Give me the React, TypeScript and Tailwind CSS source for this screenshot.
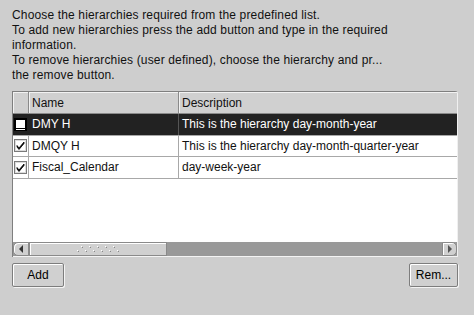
import React from 'react';

const rows = [
  { name: 'DMY H', desc: 'This is the hierarchy day-month-year', checked: false, selected: true },
  { name: 'DMQY H', desc: 'This is the hierarchy day-month-quarter-year', checked: true, selected: false },
  { name: 'Fiscal_Calendar', desc: 'day-week-year', checked: true, selected: false },
];

// Metal-style check box drawn as svg
function CheckBox({ checked, selected }: { checked: boolean; selected: boolean }) {
  if (selected) {
    return (
      <svg width="13" height="13" viewBox="0 0 13 13">
        <rect x="0.5" y="0.5" width="12" height="12" fill="#000" stroke="#000" />
        <rect x="2" y="2" width="9" height="8" fill="#fff" />
        <rect x="2" y="11" width="9" height="1" fill="#fff" />
      </svg>
    );
  }
  return (
    <svg width="13" height="13" viewBox="0 0 13 13">
      <rect x="0.5" y="0.5" width="12" height="12" fill="#fff" stroke="#7a7a7a" />
      <rect x="1.5" y="1.5" width="10" height="10" fill="none" stroke="#dcdcdc" />
      {checked && <path d="M3 6.5 L5 9 L10 3 L10 4.5 L5 10.5 L3 8 Z" fill="#000" stroke="#000" strokeWidth="0.8" />}
    </svg>
  );
}

function Grip() {
  const top = [0, 1, 2, 3, 4];
  const bottom = [0, 1, 2, 3, 4, 5];
  return (
    <svg width="42" height="8" viewBox="0 0 42 8">
      {top.map(i => (
        <g key={'t' + i}>
          <rect x={4 + i * 8} y={1} width="1" height="1" fill="#fff" />
          <rect x={5 + i * 8} y={2} width="1" height="1" fill="#888" />
        </g>
      ))}
      {bottom.map(i => (
        <g key={'b' + i}>
          <rect x={i * 8} y={5} width="1" height="1" fill="#fff" />
          <rect x={1 + i * 8} y={6} width="1" height="1" fill="#888" />
        </g>
      ))}
    </svg>
  );
}

function Button({ label, width }: { label: string; width: string }) {
  return (
    <div className={`${width} h-[24px] flex items-center justify-center rounded-[2px] border border-[#7d7d7d] bg-[#d0d0d0] shadow-[inset_1px_1px_0_#ffffff,1px_1px_0_#f4f4f4] text-[12px] text-black`}>
      {label}
    </div>
  );
}

export default function App() {
  return (
    <div
      className="w-[474px] h-[315px] bg-[#cecece] text-[#111] overflow-hidden"
      style={{ fontFamily: '"Liberation Sans", Arial, sans-serif' }}
    >
      <div className="pl-[12px] pt-[8px] text-[12px] leading-[15px] tracking-[0.15px]">
        <div>Choose the hierarchies required from the predefined list.</div>
        <div>To add new hierarchies press the add button and type in the required</div>
        <div>information.</div>
        <div>To remove hierarchies (user defined), choose the hierarchy and pr...</div>
        <div>the remove button.</div>
      </div>

      <div className="ml-[12px] mt-[8px] w-[446px] h-[166px] flex flex-col border-l border-t border-[#7f7f7f] border-r border-r-[#f0f0f0] rounded-tr-[3px] bg-white text-[12px]">
        <div className="flex h-[22px] bg-[#d0d0d0] border-b border-[#8a8a8a]">
          <div className="w-[16px] border-r border-[#8a8a8a] shadow-[inset_1px_1px_0_#f2f2f2]" />
          <div className="w-[150px] flex items-center pl-[3px] border-r border-[#8a8a8a] shadow-[inset_1px_1px_0_#f2f2f2]">Name</div>
          <div className="flex-1 flex items-center pl-[3px] shadow-[inset_1px_1px_0_#f2f2f2]">Description</div>
        </div>
        {rows.map(r => (
          <div
            key={r.name}
            className={`flex h-[21.5px] border-b border-[#a8a8a8] ${r.selected ? 'bg-[#222222] text-white' : 'bg-white text-[#111]'}`}
          >
            <div className={`w-[16px] flex items-center justify-center border-r ${r.selected ? 'border-[#222222]' : 'border-[#a8a8a8]'}`}>
              <CheckBox checked={r.checked} selected={r.selected} />
            </div>
            <div className={`w-[150px] flex items-center pl-[3px] border-r ${r.selected ? 'border-[#555555]' : 'border-[#a8a8a8]'}`}>{r.name}</div>
            <div className="flex-1 flex items-center pl-[3px]">{r.desc}</div>
          </div>
        ))}
        <div className="flex-1 bg-white" />
        <div className="flex h-[15px] bg-[#999999] border-b border-[#f4f4f4]">
          <div className="w-[16px] flex items-center justify-center bg-[#d0d0d0] border border-[#8a8a8a] rounded-l-[5px] shadow-[inset_1px_1px_0_#ffffff]">
            <svg width="5" height="8" viewBox="0 0 5 8">
              <path d="M4 0 L0 4 L4 8 Z" fill="#333" />
            </svg>
          </div>
          <div className="w-[138px] flex items-center justify-center bg-[#d0d0d0] border border-[#8a8a8a] shadow-[inset_1px_1px_0_#ffffff]">
            <Grip />
          </div>
          <div className="flex-1" />
          <div className="w-[15px] flex items-center justify-center bg-[#d0d0d0] border border-[#8a8a8a] rounded-r-[5px] shadow-[inset_1px_1px_0_#ffffff]">
            <svg width="5" height="8" viewBox="0 0 5 8">
              <path d="M1 0 L5 4 L1 8 Z" fill="#555" />
            </svg>
          </div>
        </div>
      </div>

      <div className="flex justify-between ml-[12px] mt-[6px] w-[446px]">
        <Button label="Add" width="w-[52px]" />
        <Button label="Rem..." width="w-[49px]" />
      </div>
    </div>
  );
}
